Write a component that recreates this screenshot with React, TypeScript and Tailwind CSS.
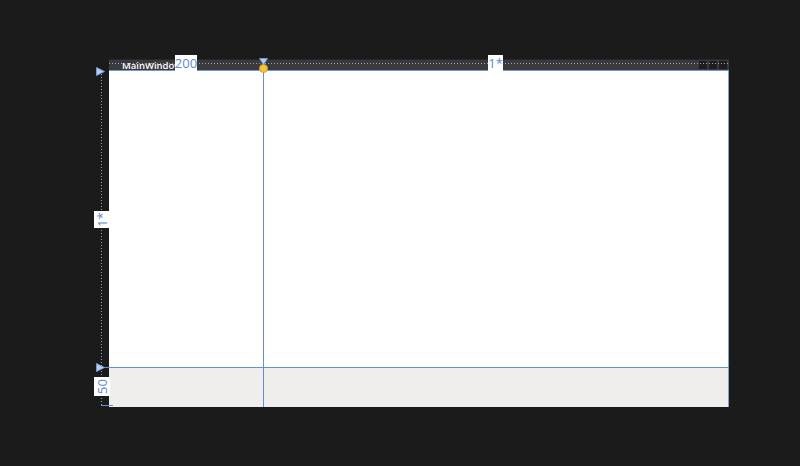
function Label({ text, className }: { text: string; className: string }) {
  return (
    <div
      className={`absolute flex items-center justify-center bg-white text-[#5a8ad0] text-[13px] leading-none ${className}`}
      style={{ fontFamily: '"Open Sans", "Liberation Sans", sans-serif' }}
    >
      {text}
    </div>
  );
}

function RightArrow({ className }: { className: string }) {
  return (
    <svg className={`absolute ${className}`} width="9" height="9" viewBox="0 0 9 9">
      <path d="M0.5 0.5 L8.5 4.5 L0.5 8.5 Z" fill="#b9cdea" stroke="#6f9ad6" strokeWidth="1" />
    </svg>
  );
}

export default function App() {
  return (
    <div className="w-[800px] h-[466px] bg-[#1b1b1b] pt-[59px] pl-[109px] overflow-hidden">
      <div className="relative w-[620px] h-[348px] flex flex-col">
        {/* title bar */}
        <div className="h-[12px] bg-[#3a3a3c] border-t border-[#262626] border-b border-b-[#6f9ad6] flex items-center pl-[13px] pr-[2px]">
          <span
            className="text-white text-[9.5px] font-semibold leading-none mt-[1px]"
            style={{ fontFamily: '"Open Sans", "Liberation Sans", sans-serif' }}
          >
            MainWindow
          </span>
          <div className="ml-auto flex gap-[2px]">
            <div className="w-[8px] h-[8px] bg-[#1e1e20]" />
            <div className="w-[8px] h-[8px] bg-[#1e1e20]" />
            <div className="w-[8px] h-[8px] bg-[#1e1e20]" />
          </div>
        </div>
        {/* grid rows */}
        <div className="flex-1 bg-white border-r border-[#7ea3d8]" />
        <div className="h-[40px] bg-[#f0eded] border-r border-[#7ea3d8]" />

        {/* rulers */}
        <div className="absolute left-0 right-0 top-[4px] h-[1px] bg-[repeating-linear-gradient(90deg,#8fa6c6_0px,#8fa6c6_1px,transparent_1px,transparent_3px)]" />
        <div className="absolute left-[-8px] top-[12px] bottom-0 w-[1px] bg-[repeating-linear-gradient(180deg,#8fa6c6_0px,#8fa6c6_1px,transparent_1px,transparent_3px)]" />
        <div className="absolute left-[-8px] w-[12px] bottom-[1px] h-[1px] bg-[#5f92d8]" />

        {/* column splitter */}
        <div className="absolute left-[154px] top-[1px] bottom-0 w-[1px] bg-[#5f92d8]" />
        <svg className="absolute left-[150px] top-[-1px]" width="9" height="7" viewBox="0 0 9 7">
          <path d="M0.5 0.5 L8.5 0.5 L4.5 6.5 Z" fill="#b9cdea" stroke="#6f9ad6" strokeWidth="1" />
        </svg>
        <div className="absolute left-[150px] top-[5px] w-[9px] h-[9px] rounded-full bg-[#f2c53d] border border-[#d9a520]" />

        {/* row splitter */}
        <div className="absolute left-[-12px] right-0 top-[308px] h-[1px] bg-[#5f92d8]" />
        <RightArrow className="left-[-13px] top-[304px]" />
        <RightArrow className="left-[-13px] top-[8px]" />

        {/* size labels */}
        <Label text="200" className="left-[66px] top-[-4px] w-[22px] h-[16px]" />
        <Label text="1*" className="left-[379px] top-[-4px] w-[15px] h-[16px]" />
        <Label text="1*" className="left-[-15px] top-[152px] w-[16px] h-[17px] [writing-mode:vertical-rl] rotate-180" />
        <Label text="50" className="left-[-15px] top-[318px] w-[16px] h-[19px] [writing-mode:vertical-rl] rotate-180" />
      </div>
    </div>
  );
}
